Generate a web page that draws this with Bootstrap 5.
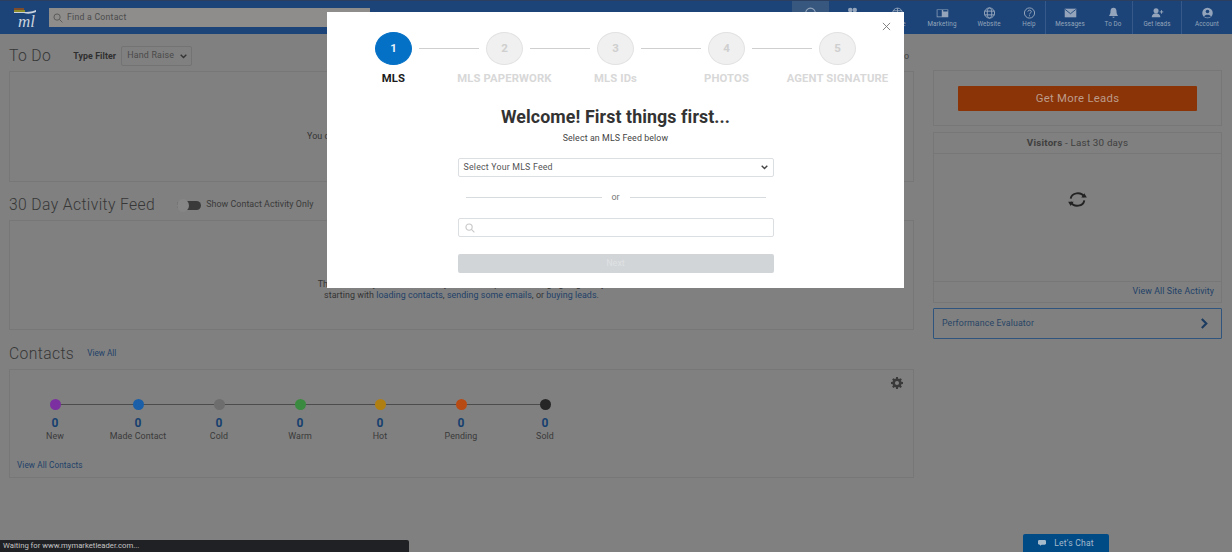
<!DOCTYPE html>
<html lang="en">
  <head>
    <meta charset="UTF-8" />
    <meta name="viewport" content="width=device-width, initial-scale=1.0" />
    <title>Welcome - First things first</title>
    <link href="https://cdn.jsdelivr.net/npm/bootstrap@5.3.0/dist/css/bootstrap.min.css" rel="stylesheet" />
    <style>
      html, body { height: 100%; }
      body {
        background: #808080;
        color: #3a3a3a;
        font-family: Roboto, "Liberation Sans", sans-serif;
        font-size: 8.9px;
        overflow: hidden;
        position: relative;
      }
      a { color: #1f4168; text-decoration: none; }

      /* top bar */
      .top-bar { height: 34px; background: #1c4478; border-top: 1px solid #2c3f5e; }
      .logo-box { width: 49px; color: #c9d2dd; }
      .logo-mark { font: italic 17px/1 "Liberation Serif", serif; margin-top: -2px; padding-left: 4px; }
      .logo-stripe { width: 24px; height: 7px; margin: 7px 0 0 13px; }
      .find-box { width: 321px; height: 19px; margin-top: 7px; background: #8e8d8b; color: #4b4b4b; font-size: 8.7px; padding-left: 4px; letter-spacing: .25px; }
      .nav-tab { height: 33px; color: #94a5bb; font-size: 6.3px; padding-top: 6px; letter-spacing: .1px; white-space: nowrap; }
      .nav-tab svg { width: 13px; height: 12px; margin-bottom: 1px; }
      .tab-active { background: #37577f; }
      .nav-sep { border-left: 1px solid #34598a; }
      .tab-37 { width: 37px; }
      .tab-46 { width: 46px; }
      .tab-44 { width: 44px; }
      .tab-48 { width: 48px; }
      .tab-32 { width: 32px; }
      .tab-49 { width: 49px; }
      .tab-38 { width: 38px; }
      .tab-51 { width: 51px; }

      /* page columns */
      .page-area { padding: 0 10px 0 9px; gap: 19px; }
      .main-col { width: 905px; }
      .side-col { width: 289px; padding-top: 36px; }
      .section-title { font-size: 15.7px; font-weight: 300; color: #373737; letter-spacing: .38px; line-height: 20px; white-space: nowrap; }
      .todo-head { height: 37px; padding-top: 12px; }
      .type-label { font-weight: 700; font-size: 8.8px; color: #2f2f2f; margin-left: 22px; letter-spacing: .1px; }
      .type-pick { width: 71px; height: 20px; border: 1px solid #737373; border-radius: 2px; color: #4a4a4a; padding-left: 5px; margin-left: 5px; letter-spacing: .2px; }
      .view-todo { margin-left: auto; padding-right: 5px; color: #444; }
      .box-line { border: 1px solid #777; background: #808080; }
      .todo-box { height: 111px; }
      .feed-head { height: 38px; padding-top: 8px; }
      .feed-box { height: 110px; }
      .contacts-head { height: 39px; padding-top: 8px; }
      .contacts-box { height: 109px; position: relative; }
      .empty-note { position: absolute; left: 0; right: 0; text-align: center; color: #343434; letter-spacing: .05px; line-height: 11px; }
      .note-one { top: 59px; }
      .note-two { top: 58px; }
      .switch-track { width: 24px; height: 9px; margin: 0 5px 0 22px; border-radius: 5px; background: #3a3a3a; position: relative; }
      .switch-knob { position: absolute; left: 0; top: -2px; width: 12px; height: 13px; border-radius: 50%; background: #868686; }
      .switch-text { color: #3a3a3a; letter-spacing: .05px; white-space: nowrap; }
      .view-all { margin-left: 13px; font-size: 8.2px; }

      .pipe-grid { display: grid; grid-template-columns: 82px 84px 78px 84px 76px 86px 82px; margin: 29px 0 0 4px; position: relative; width: 572px; text-align: center; }
      .pipe-grid::before { content: ""; position: absolute; left: 41px; width: 490px; top: 5px; height: 1px; background: #4c4c4c; }
      .pipe-dot { width: 11px; height: 11px; border-radius: 50%; margin: 0 auto 7px; position: relative; }
      .pipe-count { color: #17406f; font-weight: 700; font-size: 12px; line-height: 13px; }
      .pipe-name { color: #3a3a3a; font-size: 8.9px; line-height: 13px; letter-spacing: .1px; }
      .all-contacts { display: block; margin: 16px 0 0 7px; font-size: 8.2px; letter-spacing: .1px; }
      .gear-btn { position: absolute; right: 10px; top: 7px; width: 12px; height: 12px; color: #3a3a3a; }

      .lead-box { height: 56px; padding: 15px 24px 0 24px; }
      .leads-btn { width: 100%; height: 25px; line-height: 23px; border: 0; border-radius: 1px; background: #8a3408; color: #bd9c8a; font-size: 11.3px; padding: 0; letter-spacing: .3px; text-align: center; }
      .visitors-box { height: 171px; margin-top: 6px; }
      .visitors-head { height: 21px; line-height: 20px; border-bottom: 1px solid #777; text-align: center; font-size: 9.8px; color: #3f3f3f; letter-spacing: .2px; }
      .visitors-body { height: 127px; padding-top: 37px; }
      .visitors-body svg { width: 21px; height: 17px; color: #222; }
      .visitors-foot { height: 21px; border-top: 1px solid #777; text-align: right; padding: 3px 7px 0 0; font-size: 8.8px; letter-spacing: .1px; }
      .eval-box { height: 31px; margin-top: 5px; border: 1px solid #2f557f; border-radius: 1px; padding: 0 12px 0 8px; color: #284566; font-size: 8.8px; letter-spacing: .12px; }
      .eval-box svg { width: 9px; height: 11px; color: #1b3b60; }

      /* status + chat */
      .status-strip { position: absolute; left: 0; bottom: 0; width: 409px; height: 12px; background: #202124; border-radius: 0 2px 0 0; color: #c4c4c4; font-size: 7.7px; line-height: 12px; padding-left: 3px; }
      .chat-tab { position: absolute; left: 1023px; bottom: 0; width: 86px; height: 18px; background: #004a86; border-radius: 2px 2px 0 0; color: #a5bacb; font-size: 8.6px; letter-spacing: .2px; }
      .chat-tab svg { width: 8px; height: 6px; }

      /* wizard over the page */
      .wizard { position: absolute; left: 327px; top: 12px; width: 577px; height: 276px; background: #fff; color: #333; border: 0; border-radius: 0; }
      .wizard-close { position: absolute; right: 13px; top: 10px; width: 9px; height: 9px; color: #777; }
      .step-row { padding-top: 20px; justify-content: center; height: 75px; }
      .step-cell { width: 111px; text-align: center; position: relative; }
      .step-ball { width: 37px; height: 33px; border-radius: 50%; margin: 0 auto 7px; background: #f0f0f0; border: 1px solid #e2e2e2; color: #cfcfcf; font-weight: 700; font-size: 11.5px; line-height: 31px; }
      .step-on .step-ball { background: #0571c6; border-color: #0571c6; color: #e8f2fa; }
      .step-name { font-size: 11.3px; font-weight: 700; color: #d8d8d8; white-space: nowrap; letter-spacing: .12px; line-height: 14px; }
      .step-on .step-name { color: #1b1b1b; }
      .step-cell:not(:last-child)::after { content: ""; position: absolute; top: 16px; left: 81px; width: 60px; height: 1px; background: #cfcfcf; }
      .wizard-title { font-size: 17.8px; font-weight: 700; color: #333; margin: 0; text-align: center; line-height: 22px; padding-top: 19px; letter-spacing: .1px; box-sizing: content-box; height: 22px; }
      .wizard-sub { text-align: center; font-size: 8.8px; color: #444; line-height: 12px; margin-top: 4px; letter-spacing: .12px; }
      .wizard-form { width: 316px; margin: 14px auto 0; }
      .mls-pick { height: 19px; border: 1px solid #dcdfe2; border-radius: 2px; color: #555; font-size: 8.8px; letter-spacing: .2px; padding: 0 5px; }
      .or-row { height: 21px; margin: 10px 0; padding: 0 8px; color: #777; font-size: 9px; }
      .or-row i { height: 1px; flex: 1; background: #d8dbde; }
      .or-row span { width: 28px; text-align: center; }
      .mls-find { height: 19px; border: 1px solid #dcdfe2; border-radius: 2px; padding-left: 6px; }
      .mls-find svg { width: 10px; height: 10px; color: #c8c8c8; }
      .next-btn { display: block; width: 100%; height: 19px; margin-top: 17px; border: 0; border-radius: 2px; background: #d2d5d8; color: #dfe1e3; font-size: 9px; padding: 0; line-height: 19px; }
      .caret-down { width: 7px; height: 5px; }
    </style>
  </head>
  <body>
    <header class="top-bar d-flex">
      <div class="logo-box flex-shrink-0 text-center">
        <svg class="logo-stripe d-block" viewBox="0 0 24 7">
          <path d="M1 0h10v2H1z" fill="#7d4a2a" />
          <path d="M1 2h11v2H1z" fill="#8a8a2a" />
          <path d="M1 4h10c3 0 7 0 12-2v2c-5 2-9 2-12 1H1z" fill="#c9d2dd" />
        </svg>
        <div class="logo-mark">ml</div>
      </div>
      <div class="find-box flex-shrink-0 d-flex align-items-center gap-1">
        <svg width="10" height="10" viewBox="0 0 16 16" fill="none" stroke="#5c5c5c" stroke-width="1.6"><circle cx="6.5" cy="6.5" r="5" /><path d="M10.3 10.3 15 15" /></svg>
        Find a Contact
      </div>
      <div class="d-flex ms-auto">
        <div class="nav-tab tab-37 tab-active d-flex flex-column align-items-center">
          <svg viewBox="0 0 16 16" fill="none" stroke="currentColor" stroke-width="1.4"><circle cx="8" cy="8" r="6.5" /></svg>
        </div>
        <div class="nav-tab tab-46 d-flex flex-column align-items-center">
          <svg viewBox="0 0 16 16" fill="currentColor"><circle cx="5" cy="4" r="3" /><circle cx="11" cy="4" r="3" /><path d="M1 14c0-4 2-6 4-6s4 2 4 6zM9 14c0-4 1-6 3-6s3 2 3 6z" /></svg>
          <span>Contacts</span>
        </div>
        <div class="nav-tab tab-44 d-flex flex-column align-items-center">
          <svg viewBox="0 0 16 16" fill="none" stroke="currentColor" stroke-width="1.2"><circle cx="8" cy="8" r="6.5" /><path d="M2 5h12M2 11h12M8 1.5v13" /></svg>
          <span>Office</span>
        </div>
        <div class="nav-tab tab-46 d-flex flex-column align-items-center">
          <svg viewBox="0 0 18 16" fill="currentColor"><path d="M1 3h16v11H1zM2 4v9h6V4zM10 4v2h6V4z" fill-rule="evenodd" /></svg>
          <span>Marketing</span>
        </div>
        <div class="nav-tab tab-48 d-flex flex-column align-items-center">
          <svg viewBox="0 0 16 16" fill="none" stroke="currentColor" stroke-width="1.3"><circle cx="8" cy="8" r="6.8" /><ellipse cx="8" cy="8" rx="3" ry="6.8" /><path d="M1.5 5.5h13M1.5 10.5h13" /></svg>
          <span>Website</span>
        </div>
        <div class="nav-tab tab-32 d-flex flex-column align-items-center">
          <svg viewBox="0 0 16 16" fill="none" stroke="currentColor" stroke-width="1.3"><circle cx="8" cy="8" r="6.8" /><path d="M5.8 6.2C5.8 3.6 10.4 3.6 10.4 6.2c0 1.8-2.4 1.8-2.4 3.6" /><path d="M8 11v1.4" /></svg>
          <span>Help</span>
        </div>
        <div class="nav-tab tab-49 d-flex flex-column align-items-center nav-sep">
          <svg viewBox="0 0 18 16" fill="currentColor"><path d="M1 2h16v12H1z" /><path d="M1.5 3 9 9l7.5-6" fill="none" stroke="#1c4478" stroke-width="1.2" /></svg>
          <span>Messages</span>
        </div>
        <div class="nav-tab tab-38 d-flex flex-column align-items-center">
          <svg viewBox="0 0 16 16" fill="currentColor"><path d="M8 1c3 0 4 2 4 5 0 3 1 4 2 6H2c1-2 2-3 2-6 0-3 1-5 4-5z" /><path d="M6.500 13h3c0 1.800-3 1.800-3 0z" /></svg>
          <span>To Do</span>
        </div>
        <div class="nav-tab tab-49 d-flex flex-column align-items-center nav-sep">
          <svg viewBox="0 0 18 16" fill="currentColor"><circle cx="7" cy="5" r="3.500" /><path d="M1 14c0-4 3-5.500 6-5.500s6 1.500 6 5.500z" /><path d="M14.500 4v5M12 6.500h5" stroke="currentColor" stroke-width="1.300" /></svg>
          <span>Get leads</span>
        </div>
        <div class="nav-tab tab-51 d-flex flex-column align-items-center nav-sep">
          <svg viewBox="0 0 16 16"><circle cx="8" cy="8" r="7" fill="currentColor" /><circle cx="8" cy="6" r="2.400" fill="#1c4478" /><path d="M3.500 12.500c1-3 8-3 9 0-2 2-7 2-9 0z" fill="#1c4478" /></svg>
          <span>Account</span>
        </div>
      </div>
    </header>

    <div class="page-area d-flex">
      <main class="main-col flex-shrink-0">
        <div class="todo-head d-flex align-items-start">
          <span class="section-title">To Do</span>
          <span class="type-label pt-1">Type Filter</span>
          <div class="type-pick d-flex align-items-center justify-content-between pe-1">
            Hand Raise
            <svg class="caret-down" viewBox="0 0 10 7" fill="none" stroke="#333" stroke-width="2"><path d="m1 1 4 4 4-4" /></svg>
          </div>
          <a class="view-todo pt-1" href="#">View All To Do</a>
        </div>
        <section class="box-line todo-box position-relative">
          <p class="empty-note note-one mb-0">You don't have any hand raises to do at this time. Check back here later today.</p>
        </section>

        <div class="feed-head d-flex align-items-center">
          <span class="section-title">30 Day Activity Feed</span>
          <span class="switch-track"><span class="switch-knob"></span></span>
          <span class="switch-text">Show Contact Activity Only</span>
        </div>
        <section class="box-line feed-box position-relative">
          <p class="empty-note note-two mb-0">This is where your recent activity will show up. Get all things going today<br />starting with <a href="#">loading contacts</a>, <a href="#">sending some emails</a>, or <a href="#">buying leads</a>.</p>
        </section>

        <div class="contacts-head d-flex align-items-center">
          <span class="section-title">Contacts</span>
          <a class="view-all" href="#">View All</a>
        </div>
        <section class="box-line contacts-box">
          <svg class="gear-btn" viewBox="0 0 16 16" fill="currentColor"><path fill-rule="evenodd" d="M6.800 0h2.400l.4 2.200 1.300.6 1.900-1.300 1.700 1.700-1.300 1.900.6 1.300 2.200.4v2.400l-2.200.4-.6 1.300 1.300 1.900-1.700 1.700-1.900-1.300-1.300.6-.4 2.200H6.800l-.4-2.200-1.300-.6-1.900 1.300-1.700-1.700 1.300-1.900-.6-1.300L0 9.200V6.800l2.200-.4.6-1.300-1.300-1.900 1.700-1.700 1.900 1.300 1.300-.6zM8 5.300a2.700 2.700 0 1 0 0 5.400 2.700 2.700 0 0 0 0-5.400z" /></svg>
          <div class="pipe-grid">
            <div><div class="pipe-dot" style="background:#7b2fa0"></div><div class="pipe-count">0</div><div class="pipe-name">New</div></div>
            <div><div class="pipe-dot" style="background:#1a5fa8"></div><div class="pipe-count">0</div><div class="pipe-name">Made Contact</div></div>
            <div><div class="pipe-dot" style="background:#6d6d6d"></div><div class="pipe-count">0</div><div class="pipe-name">Cold</div></div>
            <div><div class="pipe-dot" style="background:#3a8a3f"></div><div class="pipe-count">0</div><div class="pipe-name">Warm</div></div>
            <div><div class="pipe-dot" style="background:#b07f12"></div><div class="pipe-count">0</div><div class="pipe-name">Hot</div></div>
            <div><div class="pipe-dot" style="background:#b84a14"></div><div class="pipe-count">0</div><div class="pipe-name">Pending</div></div>
            <div><div class="pipe-dot" style="background:#262626"></div><div class="pipe-count">0</div><div class="pipe-name">Sold</div></div>
          </div>
          <a class="all-contacts" href="#">View All Contacts</a>
        </section>
      </main>

      <aside class="side-col flex-shrink-0">
        <div class="box-line lead-box">
          <button class="leads-btn" type="button">Get More Leads</button>
        </div>
        <div class="box-line visitors-box">
          <div class="visitors-head"><strong>Visitors</strong> - Last 30 days</div>
          <div class="visitors-body d-flex justify-content-center">
            <svg viewBox="0 0 24 20" fill="none" stroke="currentColor" stroke-width="2.200"><path d="M4 9C5 2 16 0 20 7" /><path d="M20 11C19 18 8 20 4 13" /><path d="M16.500 7.500H23L20 2.500zM7.500 12.500H1L4 17.500z" fill="currentColor" stroke="none" /></svg>
          </div>
          <div class="visitors-foot"><a href="#">View All Site Activity</a></div>
        </div>
        <div class="eval-box d-flex align-items-center justify-content-between">
          Performance Evaluator
          <svg viewBox="0 0 10 12" fill="none" stroke="currentColor" stroke-width="2.400"><path d="m2 1 5 5-5 5" /></svg>
        </div>
      </aside>
    </div>

    <div class="status-strip">Waiting for www.mymarketleader.com...</div>
    <div class="chat-tab d-flex align-items-center justify-content-center gap-2">
      <svg viewBox="0 0 12 9" fill="currentColor"><rect width="12" height="7" rx="2" /><path d="M3 6v3l3-3z" /></svg>
      Let's Chat
    </div>

    <div class="wizard modal-content" role="dialog" aria-label="Setup">
      <svg class="wizard-close" viewBox="0 0 10 10" fill="none" stroke="currentColor" stroke-width="1"><path d="m1 1 8 8M9 1 1 9" /></svg>
      <div class="step-row d-flex">
        <div class="step-cell step-on"><div class="step-ball">1</div><div class="step-name">MLS</div></div>
        <div class="step-cell"><div class="step-ball">2</div><div class="step-name">MLS PAPERWORK</div></div>
        <div class="step-cell"><div class="step-ball">3</div><div class="step-name">MLS IDs</div></div>
        <div class="step-cell"><div class="step-ball">4</div><div class="step-name">PHOTOS</div></div>
        <div class="step-cell"><div class="step-ball">5</div><div class="step-name">AGENT SIGNATURE</div></div>
      </div>
      <h1 class="wizard-title">Welcome! First things first...</h1>
      <p class="wizard-sub mb-0">Select an MLS Feed below</p>
      <div class="wizard-form">
        <div class="mls-pick d-flex align-items-center justify-content-between">
          Select Your MLS Feed
          <svg class="caret-down" viewBox="0 0 10 7" fill="none" stroke="#444" stroke-width="2"><path d="m1 1 4 4 4-4" /></svg>
        </div>
        <div class="or-row d-flex align-items-center"><i></i><span>or</span><i></i></div>
        <div class="mls-find d-flex align-items-center">
          <svg viewBox="0 0 16 16" fill="none" stroke="currentColor" stroke-width="1.800"><circle cx="6.500" cy="6.500" r="5" /><path d="M10.300 10.300 15 15" /></svg>
        </div>
        <button class="next-btn" type="button" disabled>Next</button>
      </div>
    </div>

    <script src="https://cdn.jsdelivr.net/npm/bootstrap@5.3.0/dist/js/bootstrap.bundle.min.js"></script>
  </body>
</html>
